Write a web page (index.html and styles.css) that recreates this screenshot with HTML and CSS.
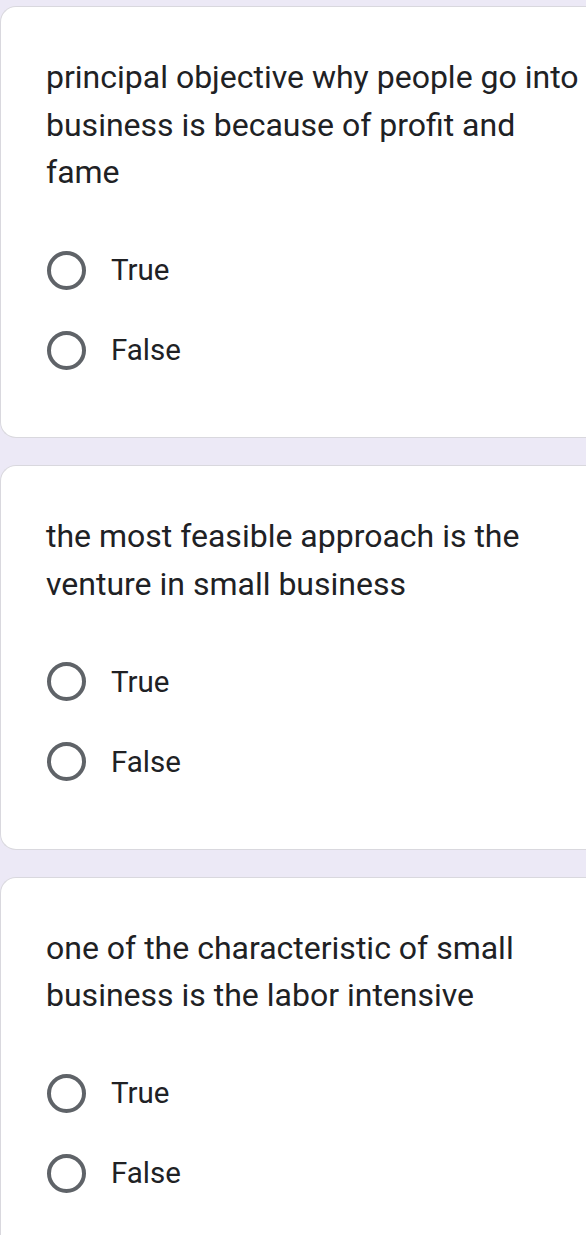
FILE: index.html
```html
<!DOCTYPE html>
<html lang="en">
<head>
<meta charset="utf-8">
<title>Form</title>
<link rel="stylesheet" href="styles.css">
</head>
<body>
<main class="form">
  <section class="card">
    <div class="question">principal objective why people go into business is because of profit and fame</div>
    <div class="options">
      <label class="option"><span class="radio"></span><span class="label">True</span></label>
      <label class="option"><span class="radio"></span><span class="label">False</span></label>
    </div>
  </section>
  <section class="card">
    <div class="question">the most feasible approach is the venture in small business</div>
    <div class="options">
      <label class="option"><span class="radio"></span><span class="label">True</span></label>
      <label class="option"><span class="radio"></span><span class="label">False</span></label>
    </div>
  </section>
  <section class="card">
    <div class="question">one of the characteristic of small business is the labor intensive</div>
    <div class="options">
      <label class="option"><span class="radio"></span><span class="label">True</span></label>
      <label class="option"><span class="radio"></span><span class="label">False</span></label>
    </div>
  </section>
</main>
</body>
</html>
```

FILE: styles.css
```css
html, body {
  margin: 0;
  padding: 0;
}
body {
  background: #ece9f6;
  font-family: Roboto, "Noto Sans", "Liberation Sans", sans-serif;
  color: #202124;
  overflow: hidden;
}
.form {
  padding-top: 6px;
  display: flex;
  flex-direction: column;
  gap: 27px;
  width: calc(100% + 30px);
}
.card {
  background: #ffffff;
  border: 1px solid #d9d8de;
  border-right: none;
  border-radius: 16px 0 0 16px;
  padding: 47px 0 63px 45px;
}
.question {
  font-size: 32px;
  line-height: 47.5px;
  width: 538px;
}
.options {
  margin-top: 49.5px;
  display: flex;
  flex-direction: column;
  gap: 32px;
}
.option {
  display: flex;
  align-items: center;
  height: 48px;
}
.radio {
  box-sizing: border-box;
  width: 39px;
  height: 39px;
  margin-left: 1px;
  border: 4px solid #5f6368;
  border-radius: 50%;
  flex: none;
}
.label {
  margin-left: 25px;
  font-size: 29.5px;
  line-height: 48px;
}
```
